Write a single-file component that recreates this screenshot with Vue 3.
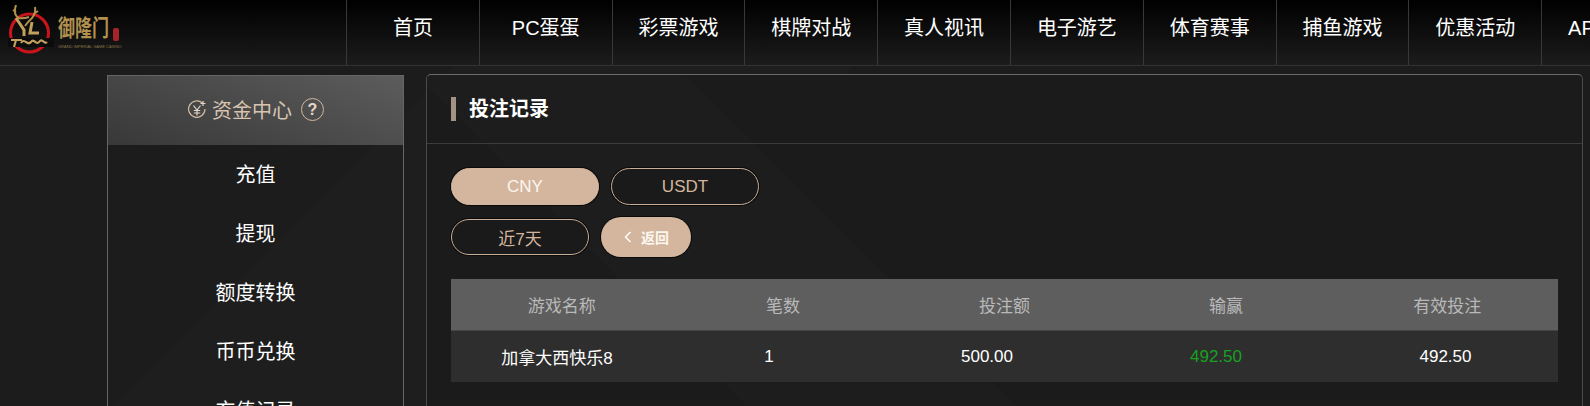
<template>
  <div class="page">
    <header class="topbar">
      <div class="logo">
        <svg class="logo-mark" width="46" height="52" viewBox="0 0 46 52">
          <circle cx="21.5" cy="28" r="19" fill="none" stroke="#c9141c" stroke-width="3" />
          <rect x="0" y="33" width="46" height="9" fill="#0b0b0b" />
          <path d="M8 0 C6 6 7 11 11 13 C15 14 18 13 21 12 M27 2 C28 8 26 12 21 16 L17 21 M5 5 L8 7 M30 6 L27 8" fill="none" stroke="#b2914f" stroke-width="2" />
          <path d="M8 13 L16 25 L16 31 M24 17 L22 28 L31 28" fill="none" stroke="#c0a05c" stroke-width="3" />
          <path d="M3 35 H14 M8 35 L6 42 M13 38 C17 32 19 42 23 37 C26 32 28 42 32 36 C35 33 36 40 39 37" fill="none" stroke="#c0a05c" stroke-width="2.2" />
        </svg>
        <div class="logo-text">
          <div class="logo-name"><span class="logo-word">御隆门</span><span class="seal"></span></div>
          <div class="logo-sub">GRAND IMPERIAL GAME CASINO</div>
        </div>
      </div>
      <nav class="nav">
        <a v-for="item in navItems" :key="item" class="nav-item">{{ item }}</a>
      </nav>
    </header>

    <div class="content">
      <aside class="sidebar">
        <div class="side-head">
          <svg width="20" height="20" viewBox="0 0 20 20">
            <path d="M15.5 3.2 A8.2 8.2 0 1 0 18 9" fill="none" stroke="#d6bda6" stroke-width="1.2" />
            <path d="M16 1 V6 M13.5 3.5 H18.5" stroke="#e6d6c6" stroke-width="1.2" />
            <path d="M6.5 5.5 L10 10 L13.5 5.5 M10 10 V15.5 M6.8 10.5 H13.2 M6.8 13 H13.2" fill="none" stroke="#e6d6c6" stroke-width="1.2" />
          </svg>
          <span class="side-title">资金中心</span>
          <span class="help">?</span>
        </div>
        <a v-for="item in sideItems" :key="item" class="side-item">{{ item }}</a>
      </aside>

      <main class="panel">
        <div class="panel-title"><i class="bar"></i><span class="title-text">投注记录</span></div>
        <div class="panel-body">
          <div class="btn-row first">
            <button class="pill solid">CNY</button>
            <button class="pill">USDT</button>
          </div>
          <div class="btn-row">
            <button class="pill range">近7天</button>
            <button class="back">
              <svg width="10" height="14" viewBox="0 0 10 14"><path d="M7.5 2 L2.5 7 L7.5 12" fill="none" stroke="#fff" stroke-width="1.5" /></svg>
              返回
            </button>
          </div>

          <div class="table">
            <div class="thead">
              <span v-for="col in columns" :key="col">{{ col }}</span>
            </div>
            <div class="tbody">
              <span>{{ row.name }}</span>
              <span>{{ row.count }}</span>
              <span>{{ row.amount }}</span>
              <span class="win">{{ row.win }}</span>
              <span>{{ row.valid }}</span>
            </div>
          </div>
        </div>
      </main>
    </div>
  </div>
</template>

<script setup>
const navItems = ['首页', 'PC蛋蛋', '彩票游戏', '棋牌对战', '真人视讯', '电子游艺', '体育赛事', '捕鱼游戏', '优惠活动', 'APP下载']
const sideItems = ['充值', '提现', '额度转换', '币币兑换', '充值记录']
const columns = ['游戏名称', '笔数', '投注额', '输赢', '有效投注']
const row = { name: '加拿大西快乐8', count: '1', amount: '500.00', win: '492.50', valid: '492.50' }
</script>

<style>
html,
body {
  margin: 0;
  background: #1b1b1b;
  overflow: hidden;
}
</style>

<style scoped>
.page {
  width: 1590px;
  height: 406px;
  overflow: hidden;
  font-family: "Liberation Sans", "Noto Sans CJK SC", sans-serif;
  color: #fff;
  background: linear-gradient(135deg, #1c1c1c 0 26%, #1e1e1e 26% 46%, #1c1c1c 46%);
}

/* top bar */
.topbar {
  display: flex;
  height: 65px;
  background: linear-gradient(#000, #1c1c1c);
  border-bottom: 1px solid #333;
}

.logo {
  width: 346px;
  flex: none;
  display: flex;
  padding: 5px 0 0 8px;
  box-sizing: border-box;
}

.logo-mark {
  flex: none;
}

.logo-text {
  margin: 13px 0 0 4px;
}

.logo-name {
  display: flex;
  height: 26px;
}

.logo-word {
  font-size: 17px;
  font-weight: 700;
  line-height: 24px;
  color: #b2914f;
  transform: scaleY(1.35);
  transform-origin: 0 50%;
}

.seal {
  width: 6px;
  height: 13px;
  margin: 10px 0 0 4px;
  border-radius: 2px;
  background: #a5242a;
}

.logo-sub {
  font-size: 4px;
  line-height: 6px;
  white-space: nowrap;
  color: #8a7448;
}

.nav {
  display: flex;
  flex: none;
}

.nav-item {
  width: 131.8px;
  height: 65px;
  border-left: 1px solid #383838;
  font-size: 20px;
  line-height: 57px;
  text-align: center;
  white-space: nowrap;
}

/* layout below the bar */
.content {
  display: flex;
  align-items: flex-start;
  padding: 8px 7px 0 107px;
  gap: 22px;
}

/* side menu */
.sidebar {
  flex: none;
  width: 295px;
  margin-top: 1px;
  border: 1px solid #666;
  border-bottom: none;
}

.side-head {
  display: flex;
  align-items: center;
  justify-content: center;
  height: 69px;
  padding-bottom: 2px;
  box-sizing: border-box;
  background: linear-gradient(20deg, #383838, #5c5c5c);
  color: #d8c4b0;
  font-size: 20px;
}

.side-title {
  margin: 0 9px 0 5px;
}

.help {
  width: 21px;
  height: 21px;
  border: 1px solid #d3b69d;
  border-radius: 50%;
  font-size: 16px;
  font-weight: 700;
  line-height: 21px;
  text-align: center;
  color: #e6d6c6;
}

.side-item {
  display: block;
  height: 59px;
  font-size: 20px;
  line-height: 61px;
  text-align: center;
}

/* main panel */
.panel {
  flex: 1;
  height: 340px;
  border: 1px solid #4a4a4a;
  border-top-color: #6a6a6a;
  border-bottom: none;
  border-radius: 5px 5px 0 0;
  background: linear-gradient(225deg, #1b1b1b 0 60%, #1d1d1d 60% 78%, #1b1b1b 78%);
}

.panel-title {
  display: flex;
  align-items: center;
  height: 68px;
  padding-left: 24px;
  border-bottom: 1px solid #3c3c3c;
  font-size: 20px;
  font-weight: 700;
}

.bar {
  width: 5px;
  height: 24px;
  margin-right: 13px;
  background: #a39384;
}

.title-text {
  margin-bottom: 4px;
}

.panel-body {
  padding: 24px 24px 0;
}

.btn-row {
  display: flex;
  align-items: center;
  gap: 12px;
}

.btn-row.first {
  margin-bottom: 12px;
}

.pill {
  width: 148px;
  height: 37px;
  padding: 0;
  border: 1px solid #c9ad94;
  border-radius: 19px;
  background: #1a1a1a;
  box-shadow: 0 0 0 1px #0a0a0a;
  font: inherit;
  font-size: 17px;
  color: #d3b69d;
}

.pill.solid {
  border-color: #d3b69d;
  background: #d3b69d;
  color: #fbf6f0;
}

.pill.range {
  width: 138px;
  height: 36px;
}

.back {
  display: flex;
  align-items: center;
  justify-content: center;
  gap: 8px;
  width: 90px;
  height: 40px;
  padding: 0;
  border: none;
  border-radius: 20px;
  background: #d3b69d;
  box-shadow: 0 0 0 1px #0a0a0a;
  font: inherit;
  font-size: 14px;
  font-weight: 700;
  color: #fbf6f0;
}

/* records table */
.table {
  margin-top: 22px;
}

.thead,
.tbody {
  display: grid;
  align-items: center;
  text-align: center;
  font-size: 17px;
}

.thead {
  grid-template-columns: repeat(5, 1fr);
  height: 50px;
  padding-bottom: 1px;
  border-bottom: 1px solid #444;
  background: #5e5e5e;
  color: #b9b9b9;
}

.tbody {
  grid-template-columns: 212px 212px 224px 234px 225px;
  height: 51px;
  background: #2e2e2e;
}

.win {
  color: #16a21f;
}
</style>
